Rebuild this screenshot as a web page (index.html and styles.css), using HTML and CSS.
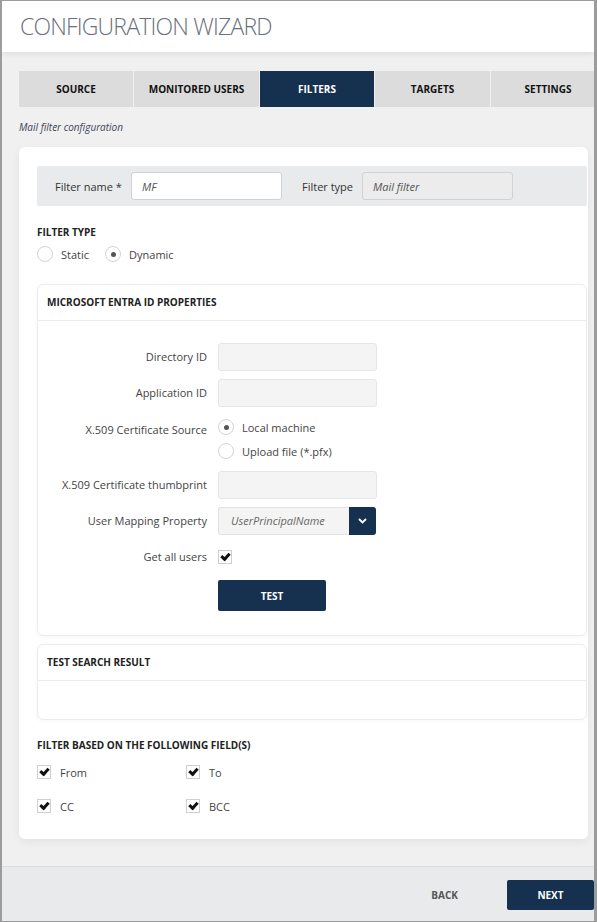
FILE: index.html
```html
<!DOCTYPE html>
<html lang="en">
<head>
  <meta charset="UTF-8">
  <title>Configuration Wizard</title>
  <meta name="viewport" content="width=device-width, initial-scale=1">
  <link rel="stylesheet" href="styles.css">
</head>
<body>
  <div class="wizard">
    <header class="wizard-header">
      <h1>CONFIGURATION WIZARD</h1>
    </header>

    <main class="wizard-body">
      <nav class="steps">
        <div class="step">SOURCE</div>
        <div class="step">MONITORED USERS</div>
        <div class="step active">FILTERS</div>
        <div class="step">TARGETS</div>
        <div class="step">SETTINGS</div>
      </nav>

      <p class="subtitle">Mail filter configuration</p>

      <section class="card">
        <div class="name-row">
          <label class="name-label">Filter name *</label>
          <input class="field name-input" type="text" value="MF">
          <label class="name-label type-label">Filter type</label>
          <input class="field readonly" type="text" value="Mail filter" readonly>
        </div>

        <h3 class="section-title">FILTER TYPE</h3>
        <div class="radio-line">
          <label class="radio"><span class="dot"></span>Static</label>
          <label class="radio"><span class="dot on"></span>Dynamic</label>
        </div>

        <div class="panel">
          <div class="panel-head">MICROSOFT ENTRA ID PROPERTIES</div>
          <div class="panel-form">
            <label class="form-label">Directory ID</label>
            <input class="field soft" type="text">

            <label class="form-label">Application ID</label>
            <input class="field soft" type="text">

            <label class="form-label source-label">X.509 Certificate Source</label>
            <div class="radio-stack">
              <label class="radio"><span class="dot on"></span>Local machine</label>
              <label class="radio"><span class="dot"></span>Upload file (*.pfx)</label>
            </div>

            <label class="form-label">X.509 Certificate thumbprint</label>
            <input class="field soft" type="text">

            <label class="form-label">User Mapping Property</label>
            <div class="select">
              <span class="select-value">UserPrincipalName</span>
              <span class="select-btn">
                <svg width="9" height="6" viewBox="0 0 9 6"><path d="M1 1l3.5 3.5L8 1" fill="none" stroke="#fff" stroke-width="1.8"/></svg>
              </span>
            </div>

            <label class="form-label">Get all users</label>
            <div class="check-cell"><span class="box checked"></span></div>

            <span></span>
            <button class="btn">TEST</button>
          </div>
        </div>

        <div class="panel result">
          <div class="panel-head">TEST SEARCH RESULT</div>
          <div class="panel-empty"></div>
        </div>

        <h3 class="section-title fields-title">FILTER BASED ON THE FOLLOWING FIELD(S)</h3>
        <div class="fields">
          <label class="check"><span class="box checked"></span>From</label>
          <label class="check"><span class="box checked"></span>To</label>
          <label class="check"><span class="box checked"></span>CC</label>
          <label class="check"><span class="box checked"></span>BCC</label>
        </div>
      </section>
    </main>

    <footer class="wizard-footer">
      <button class="link-btn">BACK</button>
      <button class="btn next">NEXT</button>
    </footer>
  </div>
</body>
</html>
```

FILE: styles.css
```css
html, body {
  margin: 0;
  padding: 0;
  height: 100%;
  font-family: "Open Sans", "Liberation Sans", sans-serif;
  color: #333;
}

.wizard {
  height: 922px;
  box-sizing: border-box;
  border: 1px solid #9c9c9c;
  border-left-width: 2px;
  border-right-width: 3px;
  display: flex;
  flex-direction: column;
  background: #f0f0f0;
  overflow: hidden;
}

.wizard-header {
  height: 51px;
  background: #fff;
  box-shadow: 0 2px 6px rgba(0,0,0,0.08);
  position: relative;
  z-index: 1;
}

.wizard-header h1 {
  margin: 0;
  padding: 9px 0 0 18px;
  font-size: 23px;
  font-weight: 300;
  color: #6b707a;
  letter-spacing: -0.8px;
}

.wizard-body {
  flex: 1;
  padding: 19px 0 0 17px;
}

.steps {
  display: grid;
  grid-template-columns: 114px 125px 114px 115px 114px;
  width: max-content;
  gap: 1px;
  height: 36px;
  background: #f0f0f0;
}

.step {
  background: #dcdcdc;
  display: flex;
  align-items: center;
  justify-content: center;
  font-size: 10px;
  font-weight: 700;
  color: #111;
}

.step.active {
  background: #163050;
  color: #fff;
}

.subtitle {
  margin: 12px 0 0;
  font-size: 10px;
  font-style: italic;
  color: #3f4657;
  height: 16px;
  line-height: 16px;
}

.card {
  margin: 12px 6px 0 0;
  background: #fff;
  border-radius: 6px;
  box-shadow: 0 3px 10px rgba(0,0,0,0.06);
  padding: 19px 1px 19px 18px;
}

.name-row {
  display: flex;
  align-items: center;
  height: 40px;
  background: #e9eaec;
  border-radius: 2px;
  padding-left: 18px;
}

.name-label {
  font-size: 11px;
  color: #333;
  width: 76px;
}

.type-label {
  margin-left: 20px;
  width: 60px;
}

.field {
  box-sizing: border-box;
  height: 28px;
  border: 1px solid #d2d2d2;
  border-radius: 3px;
  font-family: inherit;
  font-size: 11px;
  font-style: italic;
  color: #555;
  padding: 0 10px;
  outline: none;
}

.name-input {
  width: 151px;
  background: #fff;
}

.readonly {
  width: 151px;
  background: #ececec;
}

.section-title {
  margin: 19px 0 0;
  font-size: 10px;
  font-weight: 700;
  color: #222;
  line-height: 14px;
}

.radio-line {
  display: flex;
  gap: 16px;
  margin-top: 6px;
  height: 18px;
  align-items: center;
}

.radio {
  display: flex;
  align-items: center;
  gap: 8px;
  font-size: 11px;
  color: #444;
}

.dot {
  width: 14px;
  height: 14px;
  border: 1px solid #d4d4d4;
  border-radius: 50%;
  background: #fff;
  display: flex;
  align-items: center;
  justify-content: center;
}

.dot.on::after {
  content: "";
  width: 5px;
  height: 5px;
  border-radius: 50%;
  background: #555;
}

.panel {
  margin-top: 21px;
  border: 1px solid #ececec;
  border-radius: 6px;
  box-shadow: 0 1px 4px rgba(0,0,0,0.04);
}

.panel-head {
  height: 35px;
  line-height: 35px;
  padding-left: 9px;
  border-bottom: 1px solid #ececec;
  font-size: 10px;
  font-weight: 700;
  color: #222;
}

.panel-form {
  display: grid;
  grid-template-columns: 169px 1fr;
  column-gap: 11px;
  row-gap: 8px;
  padding: 22px 0 24px;
}

.form-label {
  text-align: right;
  font-size: 11px;
  color: #444;
  line-height: 28px;
  white-space: nowrap;
}

.form-label.source-label {
  line-height: 24px;
  padding-top: 3px;
}

.field.soft {
  width: 159px;
  background: #f4f4f4;
  border-color: #e6e6e6;
}

.radio-stack {
  display: flex;
  flex-direction: column;
}

.radio-stack .radio {
  height: 24px;
}

.select {
  display: flex;
  width: 158px;
  height: 28px;
  box-sizing: border-box;
}

.select-value {
  flex: 1;
  background: #f4f4f4;
  border: 1px solid #e3e3e3;
  border-right: none;
  border-radius: 3px 0 0 3px;
  font-size: 11px;
  font-style: italic;
  color: #666;
  padding-left: 12px;
  line-height: 26px;
}

.select-btn {
  width: 27px;
  background: #163050;
  border-radius: 0 3px 3px 0;
  display: flex;
  align-items: center;
  justify-content: center;
}

.check-cell {
  display: flex;
  align-items: center;
  height: 28px;
}

.box {
  width: 12px;
  height: 12px;
  border: 1px solid #cfcfcf;
  background: #fff;
  display: inline-flex;
  align-items: center;
  justify-content: center;
}

/* heavy tick drawn with two thick borders */
.box.checked::after {
  content: "";
  width: 6px;
  height: 3px;
  border-left: 3px solid #111;
  border-bottom: 3px solid #111;
  transform: rotate(-48deg);
  margin-top: -3px;
}

.btn {
  width: 108px;
  height: 31px;
  margin-top: 1px;
  background: #163050;
  color: #fff;
  border: none;
  border-radius: 2px;
  font-family: inherit;
  font-size: 10px;
  font-weight: 700;
  cursor: pointer;
}

.panel.result {
  margin-top: 8px;
}

.panel-empty {
  height: 38px;
}

.fields-title {
  margin-top: 18px;
}

.fields {
  display: grid;
  grid-template-columns: 149px 1fr;
  row-gap: 6px;
  margin-top: 6px;
}

.check {
  display: flex;
  align-items: center;
  gap: 9px;
  height: 28px;
  font-size: 11px;
  color: #444;
}

.wizard-footer {
  height: 55px;
  border-top: 1px solid #dcdcdc;
  background: #e9eaec;
  display: flex;
  align-items: center;
  justify-content: flex-end;
  padding-top: 1px;
  box-sizing: border-box;
}

.link-btn {
  background: none;
  border: none;
  font-family: inherit;
  font-size: 10px;
  font-weight: 700;
  color: #555;
  margin-right: 49px;
  padding: 0;
  cursor: pointer;
}

.btn.next {
  width: 87px;
  height: 30px;
  margin-top: 0;
}
```
